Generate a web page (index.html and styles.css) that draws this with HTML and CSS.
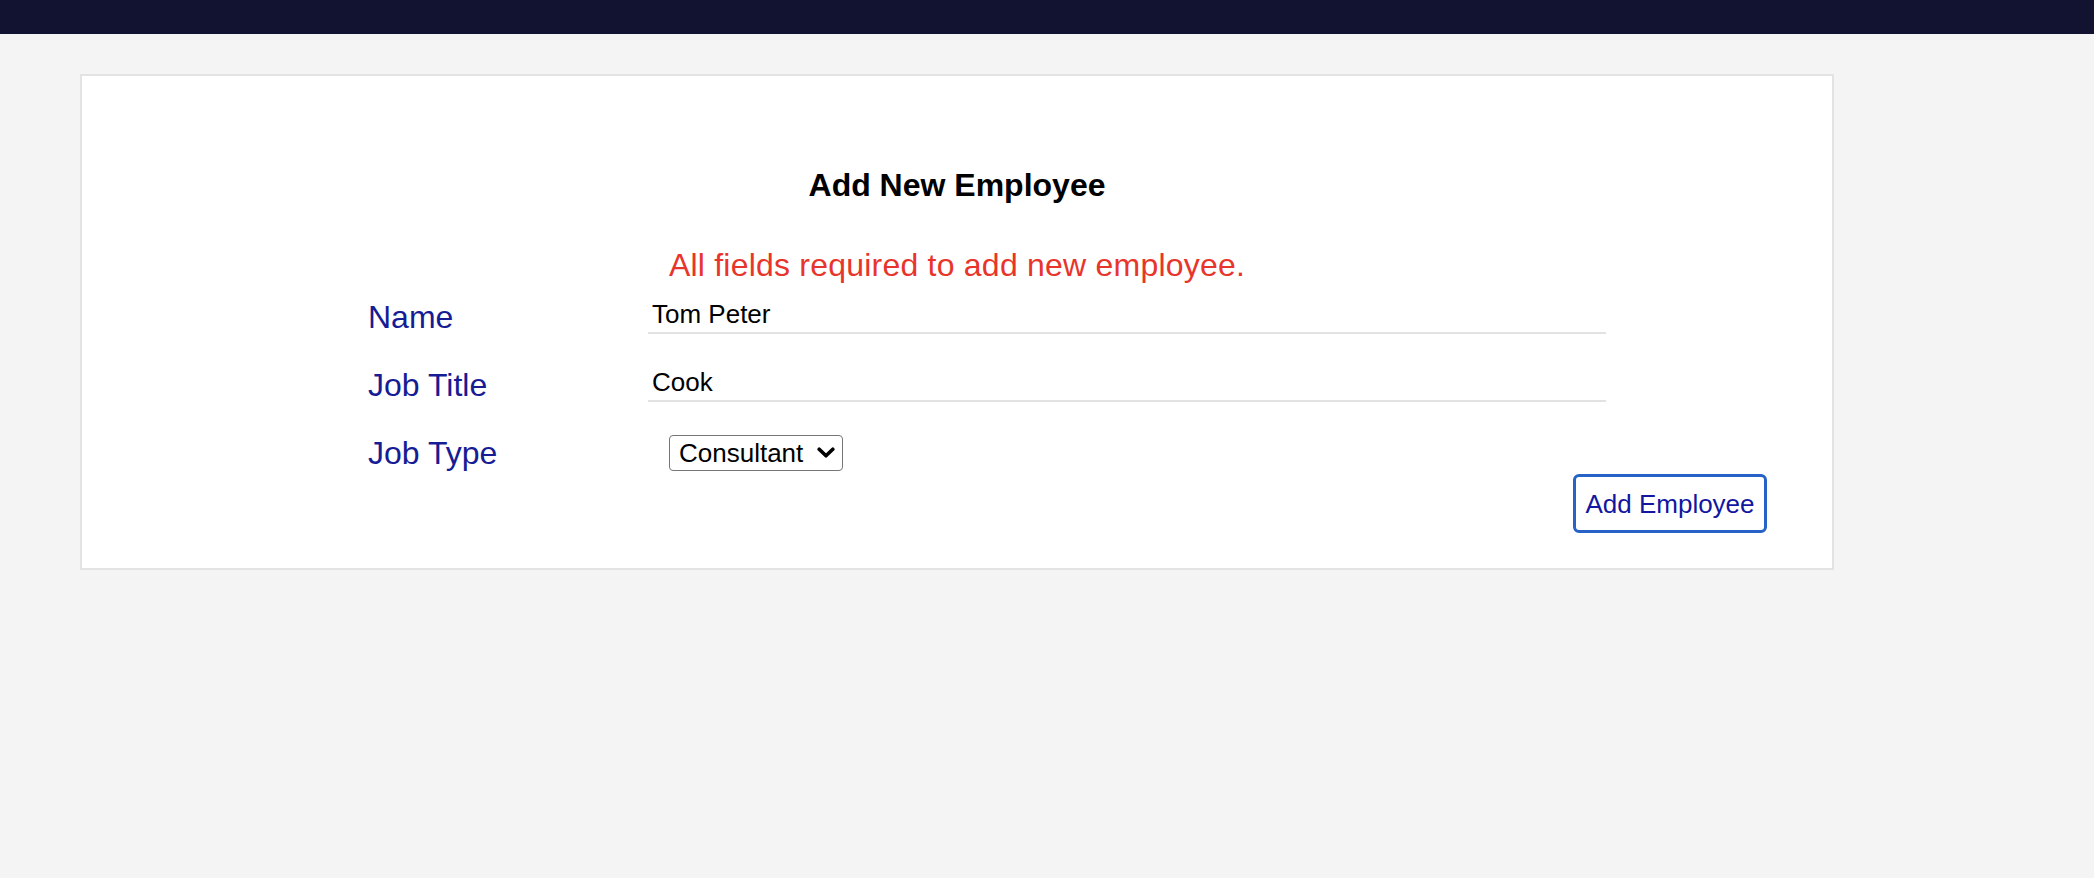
FILE: index.html
```html
<!DOCTYPE html>
<html lang="en">
<head>
<meta charset="utf-8">
<title>Add New Employee</title>
<link rel="stylesheet" href="styles.css">
</head>
<body>
<header class="topbar"></header>
<main class="page">
  <section class="card">
    <h2 class="title">Add New Employee</h2>
    <p class="message">All fields required to add new employee.</p>
    <form class="form">
      <div class="row">
        <label class="label" for="name">Name</label>
        <input class="text-input" id="name" type="text" value="Tom Peter">
      </div>
      <div class="row">
        <label class="label" for="title">Job Title</label>
        <input class="text-input" id="title" type="text" value="Cook">
      </div>
      <div class="row row-last">
        <label class="label" for="type">Job Type</label>
        <span class="select-wrap">
          <select class="select" id="type">
            <option>Full Time</option>
            <option>Part Time</option>
            <option selected>Consultant</option>
          </select>
          <svg class="chevron" width="18" height="12" viewBox="0 0 18 12" aria-hidden="true">
            <path d="M2.2 2.2 L9 8.8 L15.8 2.2" fill="none" stroke="#000" stroke-width="3.6" stroke-linecap="round" stroke-linejoin="round"/>
          </svg>
        </span>
      </div>
      <div class="actions">
        <button class="button" type="button">Add Employee</button>
      </div>
    </form>
  </section>
</main>
</body>
</html>
```

FILE: styles.css
```css
* {
  box-sizing: border-box;
}

html, body {
  margin: 0;
  padding: 0;
}

body {
  background: #f4f4f4;
  font-family: "Liberation Sans", Arial, sans-serif;
  min-height: 878px;
}

.topbar {
  height: 34px;
  background: #121330;
}

.page {
  padding: 40px 0 0 80px;
}

.card {
  width: 1754px;
  background: #ffffff;
  border: 2px solid #e3e3e3;
  padding: 91px 0 35px 0;
}

.title {
  margin: 0;
  text-align: center;
  font-size: 32px;
  line-height: 36px;
  font-weight: bold;
  color: #000000;
}

.message {
  margin: 44px 0 0 0;
  text-align: center;
  font-size: 32px;
  line-height: 36px;
  letter-spacing: 0.22px;
  color: #e8352b;
}

.form {
  margin: 16px 0 0 0;
  display: flex;
  flex-direction: column;
}

.row {
  display: flex;
  align-items: flex-start;
  padding-left: 286px;
  margin-bottom: 32px;
}

.row-last {
  margin-bottom: 3px;
}

.label {
  width: 280px;
  font-size: 32px;
  line-height: 36px;
  color: #161c94;
}

.text-input {
  width: 958px;
  height: 35px;
  margin: 0;
  padding: 0 4px 3px 4px;
  border: none;
  border-bottom: 2px solid #e2e2e2;
  font-family: "Liberation Sans", Arial, sans-serif;
  font-size: 26px;
  line-height: 30px;
  color: #000000;
  background: transparent;
  outline: none;
}

.select-wrap {
  position: relative;
  display: block;
  margin-left: 21px;
  width: 174px;
  height: 36px;
}

.select {
  -webkit-appearance: none;
  appearance: none;
  margin: 0;
  width: 174px;
  height: 36px;
  padding: 0 28px 0 9px;
  border: 1.5px solid #767676;
  border-radius: 4px;
  font-family: "Liberation Sans", Arial, sans-serif;
  font-size: 26px;
  color: #000000;
  background: #ffffff;
}

.chevron {
  position: absolute;
  left: 148px;
  top: 12px;
  pointer-events: none;
}

.actions {
  display: flex;
  justify-content: flex-end;
  padding-right: 65px;
}

.button {
  width: 194px;
  height: 59px;
  padding: 0 6px;
  border: 3px solid #2762c6;
  border-radius: 6px;
  background: #ffffff;
  font-family: "Liberation Sans", Arial, sans-serif;
  font-size: 26px;
  line-height: 30px;
  color: #1216a0;
  cursor: pointer;
}
```
